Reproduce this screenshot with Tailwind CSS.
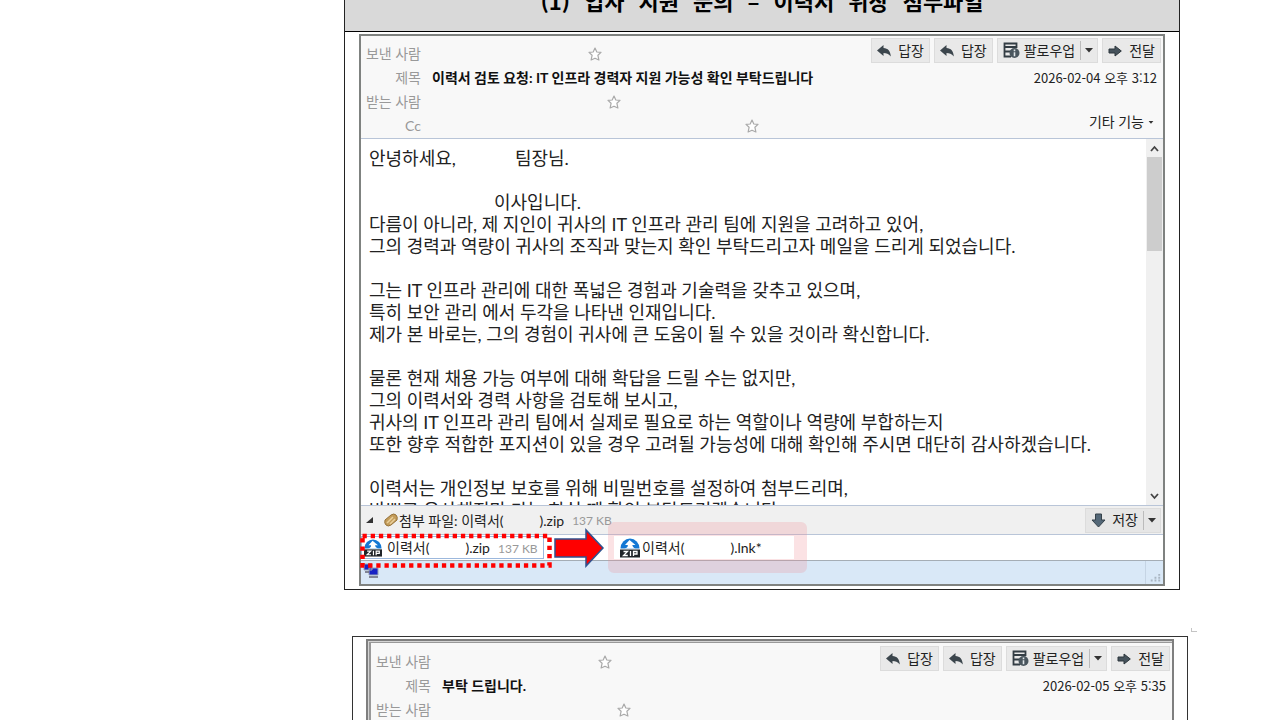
<!DOCTYPE html>
<html lang="ko">
<head>
<meta charset="utf-8">
<title>메일 첨부파일 사례</title>
<script src="https://cdn.jsdelivr.net/npm/@tailwindcss/browser@4"></script>
</head>
<body class="h-screen overflow-hidden bg-white text-sm text-[#222] font-[Lato,'Noto_Sans_CJK_KR',sans-serif]">
<svg class="hidden">
  <symbol id="star" viewBox="0 0 14 14"><path d="M7 1l1.8 4 4.2.4-3.1 2.9 1 4.7L7 11.2 3.100 13l1-4.700L1 5.400 5.200 5z" fill="#fff" stroke="#a9a9a9" stroke-width="1.200" stroke-linejoin="round"/></symbol>
  <symbol id="reply" viewBox="0 0 14 12"><path d="M0 5.500L6.500 0v3C11 3.300 13.500 6 13.800 11.500 11.500 8.500 9.500 8 6.500 8v3z" fill="#3c464d"/></symbol>
  <symbol id="forward" viewBox="0 0 14 12"><path d="M1 4h6V1l6.300 5L7 11V8H1z" fill="#46535c" stroke="#2d363c"/></symbol>
  <symbol id="follow" viewBox="0 0 17 17"><path d="M1.500 1.500h12v3.500h-12zM1.500 5v9.500H8M1.500 9.500H8" fill="none" stroke="#333d44" stroke-width="1.800"/><circle cx="11.500" cy="11" r="5" fill="#4a565e"/><path d="M11.500 7.500v1.800M11.500 10.200v4" stroke="#dfe5e8" stroke-width="1.600"/></symbol>
  <symbol id="caret" viewBox="0 0 8 5"><path d="M0 0h8L4 4.500z" fill="#333"/></symbol>
  <symbol id="zip" viewBox="0 0 20 20"><path d="M.5 10.500a9.500 10 0 0 1 19 0z" fill="#1478d4"/><path d="M9.500 2l6 5h-3.200c.2 1.600 1.200 2.800 3.200 3.500H4.500C7 10 8 9 7.800 7H5z" fill="#fff"/><path d="M0 11.500h20v8H0z" fill="#202428"/><path d="M3.500 13.500h4l-4 4h4.300M10.500 13v5M13.500 18v-4.500H17V16h-3.500" fill="none" stroke="#fff" stroke-width="1.300"/></symbol>
</svg>
<main class="ml-[344px] mr-[100px]">
  <section class="border-x border-b border-[#222] pb-[3px]">
    <h1 class="-mt-[16px] flex justify-center gap-[14px] border-b border-black bg-[#d9d9d9] pb-[15px] font-['Noto_Sans_CJK_KR',sans-serif] text-[22px] leading-8 font-bold text-black"><span>(1)</span><span>입사</span><span>지원</span><span>문의</span><span>–</span><span>이력서</span><span>위장</span><span>첨부파일</span></h1>
    <article class="relative mt-[2px] mr-[14px] ml-[14px] border-2 border-[#7f8280]">
      <header class="flex justify-between border-b border-[#b9c5d8] bg-[#f8f8f8] pt-[2px]">
        <dl class="grid grid-cols-[60px_auto] gap-x-[11px] pt-1 leading-6">
          <dt class="text-right text-[#999]">보낸 사람</dt><dd class="flex items-center"><svg class="ml-[156px] size-[14px]"><use href="#star"/></svg></dd>
          <dt class="text-right text-[#999]">제목</dt><dd class="font-bold text-[#111]">이력서 검토 요청: IT 인프라 경력자 지원 가능성 확인 부탁드립니다</dd>
          <dt class="text-right text-[#999]">받는 사람</dt><dd class="flex items-center"><svg class="ml-[175px] size-[14px]"><use href="#star"/></svg></dd>
          <dt class="text-right text-[#999]">Cc</dt><dd class="flex items-center"><svg class="ml-[313px] size-[14px]"><use href="#star"/></svg></dd>
        </dl>
        <div class="flex flex-col items-end pr-[2px]">
          <div class="flex gap-1">
            <button class="flex h-[25px] items-center gap-[7px] border border-[#dcdcdc] bg-[#e9e9e9] px-[5px]"><svg class="h-3 w-[14px]"><use href="#reply"/></svg><span>답장</span></button>
            <button class="flex h-[25px] items-center gap-[7px] border border-[#dcdcdc] bg-[#e9e9e9] px-[5px]"><svg class="h-3 w-[14px]"><use href="#reply"/></svg><span>답장</span></button>
            <div class="flex h-[25px] border border-[#dcdcdc] bg-[#e9e9e9]"><button class="flex items-center gap-1 px-[5px]"><svg class="size-[17px]"><use href="#follow"/></svg><span>팔로우업</span></button><button aria-label="팔로우업 메뉴" class="my-[2px] flex items-center border-l border-[#bbb] px-1"><svg class="h-[5px] w-2"><use href="#caret"/></svg></button></div>
            <button class="flex h-[25px] items-center gap-[7px] border border-[#dcdcdc] bg-[#e9e9e9] px-[5px]"><svg class="h-3 w-[14px]"><use href="#forward"/></svg><span>전달</span></button>
          </div>
          <time class="mt-[3px] mr-1 font-['Noto_Sans_CJK_KR',sans-serif] text-[13px] leading-6">2026-02-04 오후 3:12</time>
          <button class="mt-5 mr-[7px] flex items-center gap-1 leading-6"><span>기타 기능</span><svg class="h-[3px] w-[6px]"><use href="#caret"/></svg></button>
        </div>
      </header>
      <div class="flex h-[366px] overflow-hidden bg-white">
        <div class="flex-1 pt-2 pl-2 text-lg leading-[22px] whitespace-nowrap text-[#222]">
          <p><span>안녕하세요,</span><span class="ml-[59px]">팀장님.</span></p><br>
          <p class="pl-[125px]">이사입니다.</p>
          <p>다름이 아니라, 제 지인이 귀사의 IT 인프라 관리 팀에 지원을 고려하고 있어,</p>
          <p>그의 경력과 역량이 귀사의 조직과 맞는지 확인 부탁드리고자 메일을 드리게 되었습니다.</p><br>
          <p>그는 IT 인프라 관리에 대한 폭넓은 경험과 기술력을 갖추고 있으며,</p>
          <p>특히 보안 관리 에서 두각을 나타낸 인재입니다.</p>
          <p>제가 본 바로는, 그의 경험이 귀사에 큰 도움이 될 수 있을 것이라 확신합니다.</p><br>
          <p>물론 현재 채용 가능 여부에 대해 확답을 드릴 수는 없지만,</p>
          <p>그의 이력서와 경력 사항을 검토해 보시고,</p>
          <p>귀사의 IT 인프라 관리 팀에서 실제로 필요로 하는 역할이나 역량에 부합하는지</p>
          <p>또한 향후 적합한 포지션이 있을 경우 고려될 가능성에 대해 확인해 주시면 대단히 감사하겠습니다.</p><br>
          <p>이력서는 개인정보 보호를 위해 비밀번호를 설정하여 첨부드리며,</p>
          <p>바쁘고 유사해지만 가능 하실 때 확인 부탁드리겠습니다</p>
        </div>
        <div class="flex w-[17px] flex-col items-center bg-[#f0f0f0]">
          <svg class="h-[18px] w-[9px]" viewBox="0 0 9 18"><path d="M1 12l3.500-4L8 12" fill="none" stroke="#444" stroke-width="1.800"/></svg>
          <div class="h-[94px] w-[15px] bg-[#cdcdcd]"></div>
          <svg class="mt-auto h-[18px] w-[9px]" viewBox="0 0 9 18"><path d="M1 7l3.500 4L8 7" fill="none" stroke="#444" stroke-width="1.800"/></svg>
        </div>
      </div>
      <div class="flex h-[30px] items-center border-y border-[#b9c5d8] bg-[#f0f0f0] pl-[5px]">
        <svg class="size-2" viewBox="0 0 8 8"><path d="M7 1v6H0z" fill="#333"/></svg>
        <svg class="ml-[9px] h-[14px] w-4" viewBox="0 0 16 14"><path d="M2 7l6-5q3-2 5 0t1 5l-6 5q-3 2-5 0t-1-5" fill="#c39c5a" stroke="#967137"/><path d="M4 10l6-6M7 11l5-5" stroke="#ead09b" stroke-width="1.500"/></svg>
        <span class="pt-px">첨부 파일: 이력서(</span><span class="ml-9 pt-px">).zip</span><span class="ml-2 pt-[2px] text-xs text-[#999]">137 KB</span>
        <div class="mr-[2px] ml-auto flex h-[25px] border border-[#dcdcdc] bg-[#e6e6e6]"><button class="flex items-center gap-[6px] px-[5px]"><svg class="size-[15px]" viewBox="0 0 15 15"><path d="M4.500 1h6v6H14l-6.500 7L1 7h3.500z" fill="#536777" stroke="#35414a"/></svg><span>저장</span></button><button aria-label="저장 메뉴" class="my-[2px] flex items-center border-l border-[#bbb] px-1"><svg class="h-[5px] w-2"><use href="#caret"/></svg></button></div>
      </div>
      <div class="flex h-[26px] items-center border-b border-[#a5adb5] bg-white">
        <a href="#" class="flex h-[23px] w-[183px] items-center border border-[#9cb8dd] pl-[2px] whitespace-nowrap"><svg class="size-[18px]"><use href="#zip"/></svg><span class="ml-[5px] pt-px">이력서(</span><span class="ml-9 pt-px">).zip</span><span class="ml-2 pt-[2px] text-xs text-[#999]">137 KB</span></a>
        <a href="#" class="ml-[76px] flex items-center"><svg class="size-5"><use href="#zip"/></svg><span class="ml-[2px] pt-px">이력서(</span><span class="ml-[46px] pt-px">).lnk*</span></a>
      </div>
      <footer class="flex h-[23px] items-center justify-between bg-[#d9e8f7]">
        <svg class="-mt-1 ml-[2px] h-[15px] w-4" viewBox="0 0 16 15"><path d="M1 1h8v6H1zM6 5h9v7H6z" fill="#1822c4" stroke="#9aa4b4"/><path d="M2 9h4M6 14h9" stroke="#667" stroke-width="1.500"/></svg>
        <svg class="h-full w-[18px] border-l border-[#c5d4e4]" viewBox="0 0 18 23"><path d="M13 13h2v2h-2zM9 16h2v2H9zM13 16h2v2h-2zM5 19h2v2H5zM9 19h2v2H9zM13 19h2v2h-2z" fill="#a9b5c2"/></svg>
      </footer>
      <svg class="absolute top-[496px] left-[-1px] h-[38px] w-[194px]" viewBox="0 0 194 38"><path d="M2.500 4h187v29.500H2.500z" fill="none" stroke="#f00" stroke-width="4.500" stroke-dasharray="4.300 3.900"/></svg>
      <svg class="absolute top-[492px] left-[193px] h-[40px] w-[51px]" viewBox="0 0 51 40"><path d="M1 11h31V2l17 18-17 18v-9H1z" fill="#f00" stroke="#2f528f" stroke-width="1.500"/></svg>
      <div class="absolute top-[486px] left-[247px] h-[51px] w-[199px] rounded-md border-y-[14px] border-r-[13px] border-l-[6px] border-[#f08c92]/25"></div>
    </article>
  </section>

  <section class="relative mt-[46px] mr-[-8px] ml-2 border border-[#333] px-[13px] pt-[2px]">
    <div class="absolute top-[-9px] right-[-10px] h-[4px] w-[6px] border-b border-l border-[#c4c4c4]"></div>
    <article class="border-2 border-[#7f7f7f] bg-[#d4d4d4] pt-px pl-px">
      <header class="flex justify-between border-t border-l-2 border-[#999] bg-[#f8f8f8] pt-[2px]">
        <dl class="grid grid-cols-[60px_auto] gap-x-[11px] pt-[5px] leading-6">
          <dt class="text-right text-[#999]">보낸 사람</dt><dd class="flex items-center"><svg class="ml-[156px] size-[14px]"><use href="#star"/></svg></dd>
          <dt class="text-right text-[#999]">제목</dt><dd class="font-bold text-[#111]">부탁 드립니다.</dd>
          <dt class="text-right text-[#999]">받는 사람</dt><dd class="flex items-center"><svg class="ml-[175px] size-[14px]"><use href="#star"/></svg></dd>
          <dt class="text-right text-[#999]">Cc</dt><dd></dd>
        </dl>
        <div class="flex flex-col items-end pt-px pr-[2px]">
          <div class="flex gap-1">
            <button class="flex h-[25px] items-center gap-[7px] border border-[#dcdcdc] bg-[#e9e9e9] px-[5px]"><svg class="h-3 w-[14px]"><use href="#reply"/></svg><span>답장</span></button>
            <button class="flex h-[25px] items-center gap-[7px] border border-[#dcdcdc] bg-[#e9e9e9] px-[5px]"><svg class="h-3 w-[14px]"><use href="#reply"/></svg><span>답장</span></button>
            <div class="flex h-[25px] border border-[#dcdcdc] bg-[#e9e9e9]"><button class="flex items-center gap-1 px-[5px]"><svg class="size-[17px]"><use href="#follow"/></svg><span>팔로우업</span></button><button aria-label="팔로우업 메뉴" class="my-[2px] flex items-center border-l border-[#bbb] px-1"><svg class="h-[5px] w-2"><use href="#caret"/></svg></button></div>
            <button class="flex h-[25px] items-center gap-[7px] border border-[#dcdcdc] bg-[#e9e9e9] px-[5px]"><svg class="h-3 w-[14px]"><use href="#forward"/></svg><span>전달</span></button>
          </div>
          <time class="mt-[3px] mr-1 font-['Noto_Sans_CJK_KR',sans-serif] text-[13px] leading-6">2026-02-05 오후 5:35</time>
        </div>
      </header>
    </article>
  </section>
</main>
</body>
</html>
